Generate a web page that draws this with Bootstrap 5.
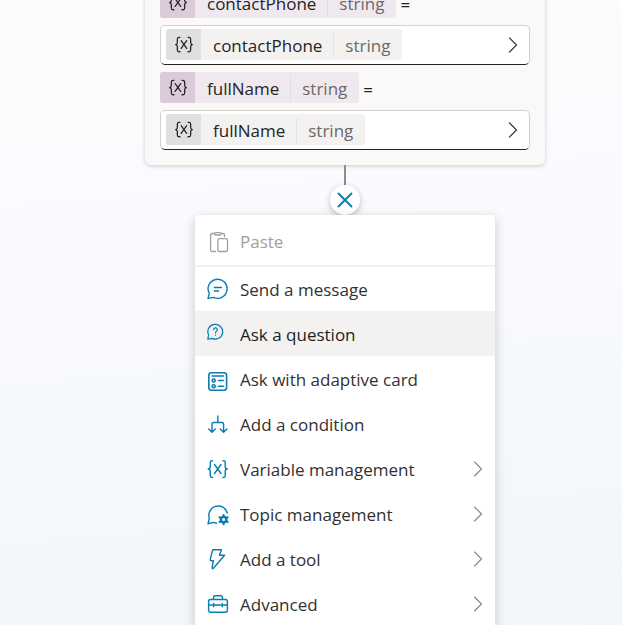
<!DOCTYPE html>
<html lang="en">
<head>
<meta charset="utf-8">
<meta name="viewport" content="width=device-width, initial-scale=1">
<title>Authoring canvas</title>
<link href="https://cdn.jsdelivr.net/npm/bootstrap@5.3.0/dist/css/bootstrap.min.css" rel="stylesheet">
<style>
body{font-family:"Open Sans","Noto Sans",sans-serif;font-size:17px;line-height:24px;color:#242424}
.canvas{background:linear-gradient(175deg,#fdfdff 0%,#f9fafe 45%,#f3f8fb 80%,#f2f7fa 100%);padding-left:68px}
.node{width:100%;max-width:400px;margin-top:-25px;padding:12px 15px 15px;gap:7px;background:#faf9f8;border-radius:6px;box-shadow:0 1px 4px rgba(0,0,0,.2)}
.chip{height:31px;border-radius:3px;overflow:hidden;background:#f0e8ef;color:#242424}
.chip-icon{width:35px;background:#dccbdb}
.chip-text{padding-top:2px}
.chip-name{padding:0 11px 0 12px}
.chip-type{padding:0 12px 0 11px;color:#6a6866;border-left:1px solid #e3dce3;line-height:25px}
.equals{padding-top:4px}
.field{height:40px;padding:0 10px 1px 5px;color:#424242;background:#fff;border:1px solid #d1d1d1;border-bottom-color:#242424;border-radius:5px}
.field .chip{background:#f3f2f1}
.field .chip-icon{background:#e1dfdd}
.field .chip-type{border-color:#e6e4e2}
.ln{fill:none;stroke:currentColor;stroke-linecap:round;stroke-linejoin:round;flex:none}
.stem{width:2px;height:20px;background:#8f8d8b}
.close-btn{width:30px;height:30px;color:#0a7db0;background:#fff;box-shadow:0 2px 6px rgba(0,0,0,.25)}
.flow-menu{width:100%;max-width:300px;background:#fff;border-radius:4px 4px 0 0;box-shadow:0 3px 12px rgba(0,0,0,.2)}
.paste-item{height:50px;padding:4px 12px 0;gap:9px;color:#a19f9d}
.menu-rule{height:2px;margin-bottom:-1px;background:#f1f1f1}
.menu-item{height:45px;padding:0 11px 0 12px;gap:9px;color:#323130}
.menu-item.hovered,.menu-item:hover{background:#f3f2f1;color:#201f1e}
.menu-item .label-text{padding-top:3px}
.glyph{color:#0a7db0}
.arrow{color:#8a8886}
</style>
<script src="https://cdn.jsdelivr.net/npm/bootstrap@5.3.0/dist/js/bootstrap.bundle.min.js"></script>
</head>
<body>
<svg class="d-none" aria-hidden="true">
  <symbol id="var" viewBox="0 0 22 20"><path d="M6.5 1.5H5.6Q3.6 1.5 3.6 3.5V7Q3.6 9.3 1.7 9.5Q3.6 9.7 3.6 12V15.5Q3.6 17.5 5.6 17.5H6.5M15.5 1.5H16.4Q18.4 1.5 18.4 3.5V7Q18.4 9.3 20.3 9.5Q18.4 9.7 18.4 12V15.5Q18.4 17.5 16.4 17.5H15.5M7.8 5.2L14 13.8M14 5.2L7.8 13.8"/></symbol>
  <symbol id="chev" viewBox="0 0 10 16"><path d="M1.5 1L8.5 8L1.5 15"/></symbol>
</svg>
<main class="canvas vh-100 overflow-hidden d-flex flex-column align-items-center">
  <section class="node d-flex flex-column align-items-start flex-shrink-0">
    <div class="d-flex align-items-center gap-1">
      <span class="chip d-flex"><span class="chip-icon d-flex align-items-center justify-content-center"><svg class="ln" width="20" height="18" stroke-width="1.4"><use href="#var"/></svg></span><span class="chip-text d-flex align-items-center"><span class="chip-name">contactPhone</span><span class="chip-type">string</span></span></span><span class="equals">=</span>
    </div>
    <button type="button" class="field w-100 d-flex align-items-center justify-content-between">
      <span class="chip d-flex"><span class="chip-icon d-flex align-items-center justify-content-center"><svg class="ln" width="20" height="18" stroke-width="1.4"><use href="#var"/></svg></span><span class="chip-text d-flex align-items-center"><span class="chip-name">contactPhone</span><span class="chip-type">string</span></span></span>
      <svg class="ln" width="12" height="16" stroke-width="1.3"><use href="#chev"/></svg>
    </button>
    <div class="d-flex align-items-center gap-1">
      <span class="chip d-flex"><span class="chip-icon d-flex align-items-center justify-content-center"><svg class="ln" width="20" height="18" stroke-width="1.4"><use href="#var"/></svg></span><span class="chip-text d-flex align-items-center"><span class="chip-name">fullName</span><span class="chip-type">string</span></span></span><span class="equals">=</span>
    </div>
    <button type="button" class="field w-100 d-flex align-items-center justify-content-between">
      <span class="chip d-flex"><span class="chip-icon d-flex align-items-center justify-content-center"><svg class="ln" width="20" height="18" stroke-width="1.4"><use href="#var"/></svg></span><span class="chip-text d-flex align-items-center"><span class="chip-name">fullName</span><span class="chip-type">string</span></span></span>
      <svg class="ln" width="12" height="16" stroke-width="1.3"><use href="#chev"/></svg>
    </button>
  </section>
  <div class="stem flex-shrink-0"></div>
  <button type="button" class="close-btn border-0 rounded-circle p-0 d-flex align-items-center justify-content-center flex-shrink-0" aria-label="Close menu">
    <svg class="ln" width="16" height="16" viewBox="0 0 16 16" stroke-width="1.9"><path d="M1.5 1.5L14.5 14.5M14.5 1.5L1.5 14.5"/></svg>
  </button>
  <div class="flow-menu position-relative d-flex flex-column flex-shrink-0" role="menu">
    <button type="button" role="menuitem" class="paste-item w-100 border-0 bg-transparent d-flex align-items-center text-start" disabled>
      <svg class="ln" width="24" height="26" viewBox="0 0 24 26" stroke-width="1.3"><path d="M8.5 22.5H5Q3.6 22.5 3.6 21V6Q3.6 4.5 5 4.5H7.5M14 4.5H16Q17.5 4.5 17.5 6V7.5M8.7 3.6H12.8Q14 3.6 14 4.8T12.8 6H8.7Q7.5 6 7.5 4.8T8.7 3.6ZM12.5 9.6H18.9Q20.5 9.6 20.5 11.2V20.9Q20.5 22.5 18.9 22.5H12.5Q10.9 22.5 10.9 20.9V11.2Q10.9 9.6 12.5 9.6Z"/></svg>
      <span>Paste</span>
    </button>
    <div class="menu-rule" role="separator"></div>
    <button type="button" role="menuitem" class="menu-item w-100 border-0 bg-transparent d-flex align-items-center text-start">
      <svg class="ln glyph" width="24" height="26" viewBox="0 0 24 26" stroke-width="1.4"><path d="M1 22.4L2.3 17.4A9.5 9.5 0 1 1 6.6 21.4ZM7.3 11.5H14.5M7.3 15H11.5"/></svg>
      <span class="label-text">Send a message</span>
    </button>
    <button type="button" role="menuitem" class="menu-item hovered w-100 border-0 d-flex align-items-center text-start">
      <svg class="ln glyph" width="24" height="26" viewBox="0 0 24 26" stroke-width="1.2"><path d="M.8 18.2L1.6 14A7.4 7.4 0 1 1 5 17.4ZM6.6 8.6Q6.8 6.8 8.5 6.8T10.4 8.5C10.4 10 8.5 10 8.5 12M8.5 14.1V14.2"/></svg>
      <span class="label-text">Ask a question</span>
    </button>
    <button type="button" role="menuitem" class="menu-item w-100 border-0 bg-transparent d-flex align-items-center text-start">
      <svg class="ln glyph" width="24" height="26" viewBox="0 0 24 26" stroke-width="1.6"><rect x="1.8" y="6.8" width="17.8" height="17.4" rx="2.6"/><path d="M5 10H16.5M11.5 14.5H16.5M11.5 20.2H16.5"/><circle cx="6.7" cy="14.5" r="1.5"/><circle cx="6.7" cy="20.2" r="1.5"/></svg>
      <span class="label-text">Ask with adaptive card</span>
    </button>
    <button type="button" role="menuitem" class="menu-item w-100 border-0 bg-transparent d-flex align-items-center text-start">
      <svg class="ln glyph" width="24" height="26" viewBox="0 0 24 26" stroke-width="1.4"><path d="M10.8 5V11.5M5 21V13.2Q5 11.5 6.7 11.5H14.9Q16.6 11.5 16.6 13.2V21M1.7 18L5 21.3L8.3 18M13.3 18L16.6 21.3L19.9 18"/></svg>
      <span class="label-text">Add a condition</span>
    </button>
    <button type="button" role="menuitem" class="menu-item w-100 border-0 bg-transparent d-flex align-items-center text-start">
      <svg class="ln glyph" width="24" height="26" viewBox="0 0 24 26" stroke-width="1.4"><path d="M5.5 4.8H5Q3.3 4.8 3.3 6.5V10.5Q3.3 12.8 1.2 13Q3.3 13.2 3.3 15.5V19.8Q3.3 21.5 5 21.5H5.5M16 4.8H16.5Q18.2 4.8 18.2 6.5V10.5Q18.2 12.8 20.3 13Q18.2 13.2 18.2 15.5V19.8Q18.2 21.5 16.5 21.5H16M7.5 8.5L14 17.5M14 8.5L7.5 17.5"/></svg>
      <span class="label-text flex-grow-1">Variable management</span>
      <svg class="ln arrow" width="12" height="16" stroke-width="1.1"><use href="#chev"/></svg>
    </button>
    <button type="button" role="menuitem" class="menu-item w-100 border-0 bg-transparent d-flex align-items-center text-start">
      <svg class="ln glyph" width="24" height="26" viewBox="0 0 24 26" stroke-width="1.4"><path d="M9.5 22.3Q8 22.1 6.6 21.4L1 22.8L2.3 17.4A9.4 9.4 0 1 1 20.3 12"/><g transform="translate(16.6 18.6)"><circle r="2.7" stroke-width="2.4"/><path d="M0 -4.2V-4.6M0 4.2V4.6M3.6 -2.1L4 -2.3M3.6 2.1L4 2.3M-3.6 -2.1L-4 -2.3M-3.6 2.1L-4 2.3" stroke-width="2.2"/></g></svg>
      <span class="label-text flex-grow-1">Topic management</span>
      <svg class="ln arrow" width="12" height="16" stroke-width="1.1"><use href="#chev"/></svg>
    </button>
    <button type="button" role="menuitem" class="menu-item w-100 border-0 bg-transparent d-flex align-items-center text-start">
      <svg class="ln glyph" width="24" height="26" viewBox="0 0 24 26" stroke-width="1.4"><path d="M6.6 3.8H14.4L12.5 9.3H17.6L6.2 22.5Q5 23.2 5.1 21.5L6.4 14.7H4.2Q3 14.7 3.3 13.3L5.4 4.7Q5.7 3.8 6.6 3.8Z"/></svg>
      <span class="label-text flex-grow-1">Add a tool</span>
      <svg class="ln arrow" width="12" height="16" stroke-width="1.1"><use href="#chev"/></svg>
    </button>
    <button type="button" role="menuitem" class="menu-item w-100 border-0 bg-transparent d-flex align-items-center text-start">
      <svg class="ln glyph" width="24" height="26" viewBox="0 0 24 26" stroke-width="1.4"><rect x="1.6" y="8.5" width="18.8" height="12.8" rx="2"/><path d="M6.5 8.3V6.5Q6.5 4.8 8.2 4.8H13.8Q15.5 4.8 15.5 6.5V8.3M1.8 14H5.5M8 14H14M16.5 14H20.2M6.7 12.5V15.8M15.3 12.5V15.8"/></svg>
      <span class="label-text flex-grow-1">Advanced</span>
      <svg class="ln arrow" width="12" height="16" stroke-width="1.1"><use href="#chev"/></svg>
    </button>
  </div>
</main>
</body>
</html>
